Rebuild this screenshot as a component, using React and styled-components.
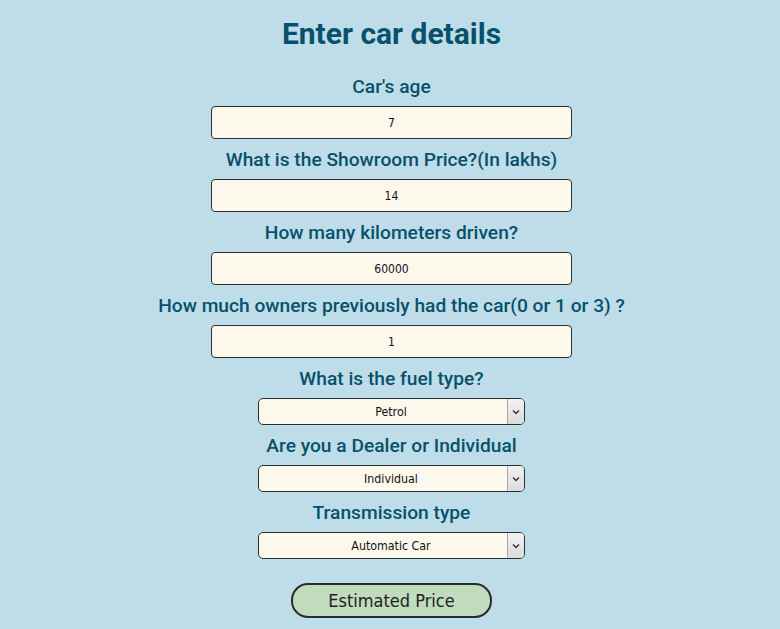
import React from 'react';
import styled, { createGlobalStyle } from 'styled-components';

const GlobalStyle = createGlobalStyle`
  html, body {
    margin: 0;
    padding: 0;
    background-color: #bedde8;
  }
`;

const Page = styled.div`
  display: flex;
  flex-direction: column;
  align-items: center;
  min-height: 629px;
  padding: 15px 0 0 3px;
  box-sizing: border-box;
  font-family: Roboto, "Liberation Sans", sans-serif;
`;

const Title = styled.h1`
  margin: 0;
  font-size: 30px;
  line-height: 38px;
  font-weight: 700;
  color: #07516c;
`;

const Form = styled.form`
  display: flex;
  flex-direction: column;
  align-items: center;
  margin-top: 23px;
`;

const Label = styled.label`
  display: block;
  padding: ${(p) => (p.$first ? '0 0 8px' : '10px 0 8px')};
  font-size: 19.2px;
  line-height: 22px;
  font-weight: 500;
  color: #07516c;
  text-align: center;
`;

const TextInput = styled.input`
  width: 361px;
  height: 33px;
  box-sizing: border-box;
  padding-top: 2px;
  border: 1px solid #2a2f33;
  border-radius: 4px;
  background-color: #fdf8ec;
  text-align: center;
  font-family: "DejaVu Sans Condensed", "DejaVu Sans", sans-serif;
  font-size: 12px;
  color: #111;
  outline: none;
`;

const SelectBox = styled.div`
  display: flex;
  width: 267px;
  height: 27px;
  box-sizing: border-box;
  border: 1px solid #2a2f33;
  border-radius: 5px;
  background-color: #fdf8ec;
  overflow: hidden;
`;

const Select = styled.select`
  flex: 1;
  appearance: none;
  border: none;
  background: transparent;
  text-align: center;
  text-align-last: center;
  padding-left: 16px;
  font-family: "DejaVu Sans Condensed", "DejaVu Sans", sans-serif;
  font-size: 12.3px;
  color: #111;
  outline: none;
`;

const Arrow = styled.span`
  display: flex;
  align-items: center;
  justify-content: center;
  width: 16px;
  border-left: 1px solid #a9a9a9;
  background: linear-gradient(#f2f2f2, #dcdcdc);
`;

const Button = styled.button`
  margin-top: 24px;
  width: 201px;
  height: 35px;
  border: 2px solid #262c30;
  border-radius: 17px;
  background-color: #c0dcbc;
  font-family: "DejaVu Sans Condensed", "DejaVu Sans", sans-serif;
  font-size: 18px;
  color: #1d2228;
  cursor: pointer;
`;

const fields = [
  { label: "Car's age", value: '7' },
  { label: 'What is the Showroom Price?(In lakhs)', value: '14' },
  { label: 'How many kilometers driven?', value: '60000' },
  { label: 'How much owners previously had the car(0 or 1 or 3) ?', value: '1' },
];

const selects = [
  { label: 'What is the fuel type?', options: ['Petrol', 'Diesel', 'CNG'] },
  { label: 'Are you a Dealer or Individual', options: ['Individual', 'Dealer'] },
  { label: 'Transmission type', options: ['Automatic Car', 'Manual Car'] },
];

function Chevron() {
  return (
    <svg width="8" height="6" viewBox="0 0 8 6">
      <path d="M1 1.5 L4 4.5 L7 1.5" fill="none" stroke="#333" strokeWidth="1.4" />
    </svg>
  );
}

export default function App() {
  return (
    <>
      <GlobalStyle />
      <Page>
        <Title>Enter car details</Title>
        <Form onSubmit={(e) => e.preventDefault()}>
          {fields.map((f, i) => (
            <React.Fragment key={f.label}>
              <Label $first={i === 0}>{f.label}</Label>
              <TextInput type="text" defaultValue={f.value} />
            </React.Fragment>
          ))}
          {selects.map((s) => (
            <React.Fragment key={s.label}>
              <Label>{s.label}</Label>
              <SelectBox>
                <Select defaultValue={s.options[0]}>
                  {s.options.map((o) => (
                    <option key={o}>{o}</option>
                  ))}
                </Select>
                <Arrow>
                  <Chevron />
                </Arrow>
              </SelectBox>
            </React.Fragment>
          ))}
          <Button type="submit">Estimated Price</Button>
        </Form>
      </Page>
    </>
  );
}
